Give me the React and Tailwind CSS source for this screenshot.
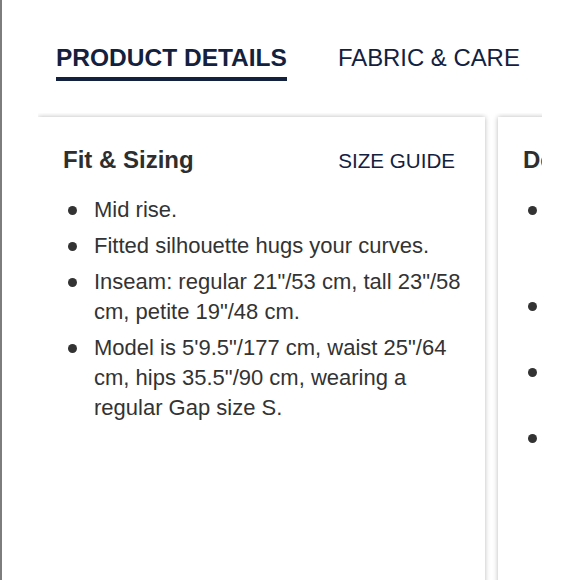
import React from "react";

const fitItems = [
  ["Mid rise."],
  ["Fitted silhouette hugs your curves."],
  ['Inseam: regular 21"/53 cm, tall 23"/58 cm, petite 19"/48 cm.'],
  ['Model is 5\'9.5"/177 cm, waist 25"/64 cm, hips 35.5"/90 cm, wearing a regular Gap size S.'],
];

// second card is mostly cut off, lines forced so the bullets land in place
const detailItems = [
  ["Made with our softest stretch", "denim that holds its shape", "all day long."],
  ["Zip fly with button closure", "and belt loops."],
  ["Classic five-pocket styling", "with a clean, dark wash."],
  ["Skinny leg."],
];

function Card({ title, action, items }) {
  return (
    <div className="w-[447px] h-[480px] shrink-0 bg-white shadow-[0_0_5px_rgba(0,0,0,0.28)] pt-[29px] pl-[25px] pr-[15px]">
      <div className="flex items-baseline justify-between pr-[15px] h-[28px]">
        <h3 className="text-[24px] leading-[28px] font-bold text-[#2e2e2e]">{title}</h3>
        {action && (
          <a className="text-[20.6px] leading-[28px] text-[#13213f]">{action}</a>
        )}
      </div>
      <ul className="mt-[21px] flex flex-col gap-[6px]">
        {items.map((lines, i) => (
          <li key={i} className="flex">
            <span className="w-[9px] h-[9px] rounded-full bg-[#333] shrink-0 ml-[5px] mt-[11px]" />
            <span className="ml-[17px] text-[22px] leading-[30px] text-[#333]">
              {lines.map((l, j) => (
                <React.Fragment key={j}>
                  {j > 0 && <br />}
                  {l}
                </React.Fragment>
              ))}
            </span>
          </li>
        ))}
      </ul>
    </div>
  );
}

export default function App() {
  return (
    <div
      className="w-[580px] h-[580px] bg-white border-l-2 border-[#7d7d7d] overflow-hidden"
      style={{ fontFamily: '"Liberation Sans", Arial, sans-serif' }}
    >
      <div className="pt-[43px] pl-[54px] flex gap-[51px]">
        <div className="text-[24.5px] leading-[30px] font-bold text-[#13213f] pb-[4px] border-b-4 border-[#13213f]">
          PRODUCT DETAILS
        </div>
        <div className="text-[23.9px] leading-[30px] text-[#13213f]">FABRIC &amp; CARE</div>
      </div>
      <div className="mt-[32px] ml-[36px] w-[504px] overflow-hidden pt-[4px]">
        <div className="flex gap-[13px]">
          <Card title="Fit & Sizing" action="SIZE GUIDE" items={fitItems} />
          <Card title="Details" items={detailItems} />
        </div>
      </div>
    </div>
  );
}
